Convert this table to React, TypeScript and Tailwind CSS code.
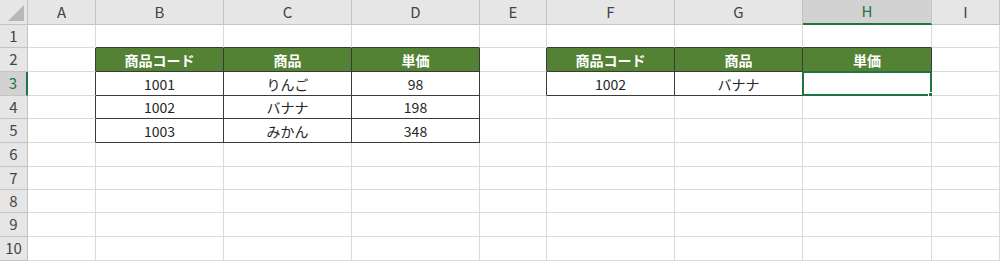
import React from 'react'

const COLS = ['A', 'B', 'C', 'D', 'E', 'F', 'G', 'H', 'I']
const ROWS = [1, 2, 3, 4, 5, 6, 7, 8, 9, 10]

// cell values keyed by "col+row"
const DATA: Record<string, string> = {
  B2: '商品コード', C2: '商品', D2: '単価',
  B3: '1001', C3: 'りんご', D3: '98',
  B4: '1002', C4: 'バナナ', D4: '198',
  B5: '1003', C5: 'みかん', D5: '348',
  F2: '商品コード', G2: '商品', H2: '単価',
  F3: '1002', G3: 'バナナ', H3: ''
}

const inTable = (c: number, r: number): boolean =>
  (c >= 1 && c <= 3 && r >= 2 && r <= 5) || (c >= 5 && c <= 7 && r >= 2 && r <= 3)

const isHead = (c: number, r: number): boolean => inTable(c, r) && r === 2

function Cell ({ c, r }: { c: number, r: number }): React.ReactElement {
  const key = COLS[c] + String(r)
  const table = inTable(c, r)
  const darkRight = table || inTable(c + 1, r)
  const darkBottom = table || inTable(c, r + 1)
  const head = isHead(c, r)
  const selected = key === 'H3'
  return (
    <div
      className={[
        'relative flex items-center justify-center border-r border-b text-[14px] leading-none',
        darkRight ? 'border-r-[#3a3a3a]' : 'border-r-[#dadada]',
        darkBottom ? 'border-b-[#3a3a3a]' : 'border-b-[#dadada]',
        head ? 'bg-[#548235] text-white font-bold' : 'bg-white text-[#262626]'
      ].join(' ')}
    >
      {DATA[key]}
      {selected && (
        <div className="absolute -left-px -top-px -right-px -bottom-px border-2 border-[#217346]">
          <div className="absolute -right-[4px] -bottom-[4px] w-[6px] h-[6px] bg-[#217346] border border-white" />
        </div>
      )}
    </div>
  )
}

export default function App (): React.ReactElement {
  return (
    <div
      className="w-[1000px] h-[261px] overflow-hidden bg-white"
      style={{ fontFamily: '"Noto Sans CJK JP", "Noto Sans", sans-serif' }}
    >
      <div className="grid grid-cols-[28px_68px_128px_128px_128px_67px_128px_128px_129px_1fr] grid-rows-[25px_23px_24px_24px_23px_24px_24px_23px_23px_24px_24px]">
        {/* corner */}
        <div className="relative bg-[#e6e6e6] border-r border-b border-[#c4c4c4]">
          <svg className="absolute right-[3px] bottom-[3px]" width="16" height="16" viewBox="0 0 16 16">
            <polygon points="16,0 16,16 0,16" fill="#b7b7b7" />
          </svg>
        </div>
        {COLS.map((col) => (
          <div
            key={col}
            className={col === 'H'
              ? 'flex items-center justify-center bg-[#d2d2d2] border-r border-r-[#c4c4c4] border-b-2 border-b-[#217346] text-[15px] text-[#217346]'
              : 'flex items-center justify-center bg-[#e6e6e6] border-r border-b border-[#c4c4c4] text-[15px] text-[#444]'}
          >
            {col}
          </div>
        ))}
        {ROWS.map((r) => (
          <React.Fragment key={r}>
            <div
              className={r === 3
                ? 'flex items-center justify-center bg-[#d2d2d2] border-r-2 border-r-[#217346] border-b border-b-[#c4c4c4] text-[15px] text-[#217346]'
                : 'flex items-center justify-center bg-[#e6e6e6] border-r border-b border-[#c4c4c4] text-[15px] text-[#444]'}
            >
              {r}
            </div>
            {COLS.map((_, c) => (
              <Cell key={c} c={c} r={r} />
            ))}
          </React.Fragment>
        ))}
      </div>
    </div>
  )
}
